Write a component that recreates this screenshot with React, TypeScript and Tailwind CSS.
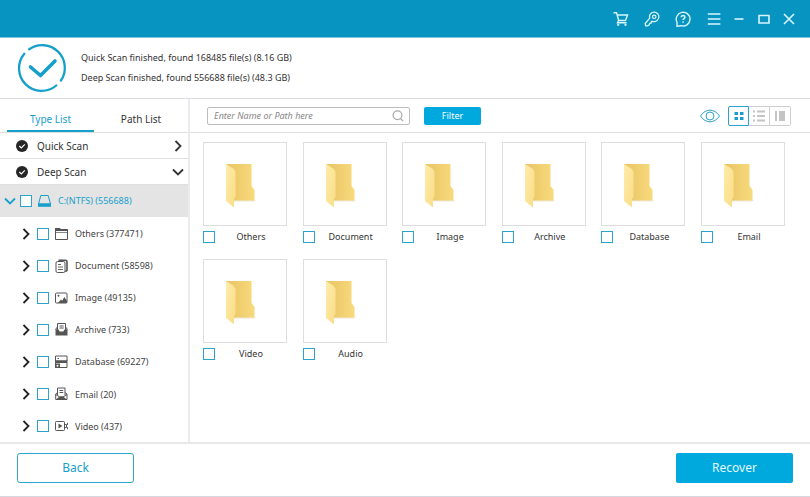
import React, { useState } from "react";

type IconProps = { children: React.ReactNode; className?: string; box?: string };

function Glyph({ children, className = "size-4", box = "0 0 16 16" }: IconProps) {
  return (
    <svg viewBox={box} className={`shrink-0 ${className}`} fill="none" stroke="currentColor" strokeWidth="1.2" aria-hidden="true">
      {children}
    </svg>
  );
}

const titleActions = [
  {
    label: "Cart",
    icon: (
      <>
        <path d="M.5 1.8h3l2.2 7.7h6.8l2-5.5H4.2M5.5 9.5l-1 2.3h9" strokeWidth="1.4" />
        <path d="M4.2 12.8h2v2h-2zM11.5 12.8h2v2h-2z" fill="currentColor" stroke="none" />
      </>
    ),
  },
  {
    label: "Register",
    icon: (
      <>
        <path d="M5.7 7.2A4.7 4.7 0 1 1 8.8 10.3L7.5 10.5l-.3 1.5-1.5.3-.5 1.6-1.4.9H1.7l-.5-2.3z" strokeWidth="1.3" strokeLinejoin="round" />
        <circle cx="10.2" cy="5.8" r="1.7" />
      </>
    ),
  },
  {
    label: "Help",
    icon: (
      <>
        <path d="M2 15.2v-3.9A6.9 6.9 0 1 1 6 14.7z" strokeWidth="1.4" />
        <path d="M6.3 6.2c0-2.4 3.6-2.3 3.6 0 0 1.4-1.8 1.3-1.8 2.9M8.1 10.2v1.5" strokeWidth="1.5" />
      </>
    ),
  },
  { label: "Menu", icon: <path d="M1.8 3h12.6M1.8 8h12.6M1.8 13h12.6" strokeWidth="1.6" /> },
];

const windowActions = [
  { label: "Minimize", icon: <path d="M3.5 8h9" strokeWidth="1.6" /> },
  { label: "Maximize", icon: <path d="M3 4.5h10v7.5H3z" strokeWidth="1.6" /> },
  { label: "Close", icon: <path d="m3 3 10 10M13 3 3 13" strokeWidth="1.6" /> },
];

const types = [
  {
    name: "Others",
    count: 377471,
    icon: (
      <>
        <path d="M1.5 3.5h12v10h-12z" strokeWidth="1" />
        <path d="M1 2h5l1.200 1.500H14V5H1z" fill="currentColor" stroke="none" />
        <path d="M1.500 6.500h12" strokeWidth=".7" />
      </>
    ),
  },
  {
    name: "Document",
    count: 58598,
    icon: (
      <>
        <path d="M4.500 2.300h7a1.500 1.500 0 0 1 1.500 1.500v8.500l-1.500 1.500" strokeWidth="1.600" />
        <rect x="2" y="3.500" width="9" height="11" rx="1.500" strokeWidth="1" />
        <path d="M4 6.500h3M4 9h5M4 11.500h5" strokeWidth=".9" />
      </>
    ),
  },
  {
    name: "Image",
    count: 49135,
    icon: (
      <>
        <rect x="1.500" y="3" width="11.500" height="10" rx="1" strokeWidth="1" />
        <path d="m4 13 3-3.500 1.200 1.300L10.300 7l2.700 4v2z" fill="currentColor" stroke="none" />
        <circle cx="4.500" cy="5.700" r="1" fill="currentColor" stroke="none" />
      </>
    ),
  },
  {
    name: "Archive",
    count: 733,
    icon: (
      <>
        <path d="M3.500 8V1.500h8V8M5.500 4h4.200M5.500 6h4.200" strokeWidth="1" />
        <path d="M1.500 7.500h3l1.200 2h3.600l1.200-2h3v6h-12z" fill="currentColor" stroke="none" />
        <path d="M2.500 5.500 1.800 8M12.500 5.500l.7 2.500" strokeWidth="1" />
      </>
    ),
  },
  {
    name: "Database",
    count: 69227,
    icon: (
      <>
        <path d="M1.500 2h11.500v5H1.500zM1.500 8.500h11.500v5H1.500z" strokeWidth="1" />
        <path d="M1 6.500h12.500v2H1zM1 9.500h5V14H1z" fill="currentColor" stroke="none" />
        <path d="M3.500 4.500H5" strokeWidth="1" />
        <circle cx="3.500" cy="11.800" r="1" fill="white" stroke="none" />
      </>
    ),
  },
  {
    name: "Email",
    count: 20,
    icon: (
      <>
        <path d="M3.500 9V2h7.500v7M5.500 4.500h3.700M5.500 6.500h3.700M3.500 6.500 1.700 8v5.500H13V8l-2-1.500" strokeWidth="1" />
        <path d="m1.700 8.500 4 2.500h3.300l4-2.500" strokeWidth="1" />
        <path d="m2 13.500 3.500-3h3.700l3.500 3z" fill="currentColor" stroke="none" />
      </>
    ),
  },
  {
    name: "Video",
    count: 437,
    icon: (
      <>
        <rect x="1.500" y="3.500" width="9" height="9" rx=".8" strokeWidth="1" />
        <path d="M4.500 5.500 8.500 8l-4 2.500z" fill="currentColor" stroke="none" />
        <path d="M11 6.500h1.500v3H11M13.500 4.800v2M13.500 9.200v2" strokeWidth="1" />
      </>
    ),
  },
];

const folders = ["Others", "Document", "Image", "Archive", "Database", "Email", "Video", "Audio"];

function CheckBox({ id }: { id: string }) {
  return (
    <input
      id={id}
      type="checkbox"
      className="size-3 shrink-0 appearance-none border border-[#2ba3cd] bg-white checked:bg-[#00a9dd]"
    />
  );
}

function Chevron({ down = false, className = "" }: { down?: boolean; className?: string }) {
  return (
    <Glyph className={`size-3 ${className}`} box="0 0 12 12">
      <path d={down ? "M1 3.500 6 8.500l5-5" : "M3.500 1l5 5-5 5"} strokeWidth="1.800" />
    </Glyph>
  );
}

function FolderArt() {
  return (
    <svg viewBox="0 0 32 46" className="h-[46px] w-8" aria-hidden="true">
      <defs>
        <linearGradient id="back" x1="0" x2="1">
          <stop offset="0" stopColor="#e8c464" />
          <stop offset="1" stopColor="#f8da7c" />
        </linearGradient>
        <linearGradient id="flap" x1="0" x2="1" y2="1">
          <stop offset="0" stopColor="#ffecaa" />
          <stop offset="1" stopColor="#f9dc86" />
        </linearGradient>
      </defs>
      <path d="M8 37h23l-2 1.500H9z" fill="#eee8d8" />
      <path d="M1 1h25.500v22l3 4v10.500H1z" fill="url(#back)" />
      <path d="m1 1 8 5 1.500 3v25L9 36v8.500L1 38z" fill="url(#flap)" />
    </svg>
  );
}

function StatusMark() {
  return (
    <svg viewBox="0 0 50 50" className="size-[50px] shrink-0" fill="none" stroke="#179fcc" strokeLinecap="round" aria-hidden="true">
      <path d="M12.200 6.300A22.600 22.600 0 0 1 43.900 37.500M39.300 42.500A22.600 22.600 0 0 1 7.300 10.800" strokeWidth="2.300" />
      <path d="m13.500 24 10 8.500 14.500-14.500" strokeWidth="3.600" strokeLinejoin="round" />
    </svg>
  );
}

function ScanRow({ name, open }: { name: string; open?: boolean }) {
  return (
    <button type="button" className="flex h-[26px] w-full shrink-0 items-center border-b border-[#dfdfdf] pt-px pr-1 pl-4 text-[#333]">
      <svg viewBox="0 0 12 12" className="size-3" aria-hidden="true">
        <circle cx="6" cy="6" r="6" fill="#262626" />
        <path d="m3.300 6 2 2 3.500-3.700" fill="none" stroke="white" strokeWidth="1.100" />
      </svg>
      <span className="ml-[9px] flex-1 text-left text-[10px]">{name}</span>
      <Chevron down={open} />
    </button>
  );
}

function Sidebar() {
  return (
    <aside className="flex w-[190px] shrink-0 flex-col border-r-2 border-[#e9ebee]">
      <div role="tablist" className="flex h-[34px] shrink-0 border-b border-[#dfdfdf] pl-[7px] text-[10px]">
        <button type="button" role="tab" aria-selected="true" className="w-[87px] shrink-0 border-b-2 border-[#179fcc] pt-[10px] text-[#179fcc]">
          Type List
        </button>
        <button type="button" role="tab" aria-selected="false" className="flex-1 border-b-2 border-transparent pt-[10px] text-[#333]">
          Path List
        </button>
      </div>
      <ScanRow name="Quick Scan" />
      <ScanRow name="Deep Scan" open />
      <div className="flex h-8 shrink-0 items-center bg-[#e4e4e4] pl-1 text-[#179fcc]">
        <Chevron down />
        <span className="ml-1 flex items-center">
          <CheckBox id="drive" />
        </span>
        <Glyph className="ml-[5px] size-4">
          <path d="M3.800 2.500h7.400L13.500 11H1.500z" strokeWidth="1" />
          <path d="M1 10.500h13v3.300H1z" fill="currentColor" stroke="none" />
        </Glyph>
        <label htmlFor="drive" className="ml-[5px] text-[9px]">
          C:(NTFS) (556688)
        </label>
      </div>
      <ul className="flex flex-1 flex-col">
        {types.map((t) => (
          <li key={t.name} className="flex min-h-8 flex-1 items-center pt-px pl-5 text-[#555]">
            <Chevron className="text-[#222]" />
            <span className="ml-[5px] flex items-center">
              <CheckBox id={`type-${t.name}`} />
            </span>
            <Glyph className="ml-[5px] size-4">{t.icon}</Glyph>
            <label htmlFor={`type-${t.name}`} className="ml-[5px] text-[9px] text-[#444]">
              {t.name} ({t.count})
            </label>
          </li>
        ))}
      </ul>
    </aside>
  );
}

function Toolbar() {
  const [query, setQuery] = useState("");
  return (
    <div className="flex h-[34px] shrink-0 items-center border-b border-[#dfdfdf] pr-[19px] pl-[17px]">
      <div className="flex h-[18px] w-[203px] items-center rounded-xs border border-[#bdbdbd] pr-[5px] pl-1.5">
        <input
          type="text"
          aria-label="Search by name or path"
          placeholder="Enter Name or Path here"
          value={query}
          onChange={(e) => setQuery(e.target.value)}
          className="min-w-0 flex-1 text-[9px] italic outline-none placeholder:text-[#888]"
        />
        <Glyph className="size-3 text-[#aaa]" box="0 0 12 12">
          <circle cx="5.500" cy="5.300" r="4.400" />
          <path d="m8.500 8.500 2.700 2.700" />
        </Glyph>
      </div>
      <button type="button" className="ml-[14px] h-[18px] w-[57px] rounded-xs bg-[#00a9dd] text-[9px] text-white">
        Filter
      </button>
      <button type="button" aria-label="Preview" className="mr-2 ml-auto text-[#2ba3cd]">
        <svg viewBox="0 0 20 14" className="h-[14px] w-5" fill="none" stroke="currentColor" aria-hidden="true">
          <path d="M.5 7C5.500-.8 14.500-.8 19.500 7 14.500 14.800 5.500 14.800.5 7z" />
          <circle cx="10" cy="7" r="4" />
        </svg>
      </button>
      <div className="flex h-5 text-[#c4c4c4]">
        <button type="button" aria-label="Grid view" className="flex w-[21px] items-center justify-center rounded-l-xs border border-[#2ba3cd] text-[#179fcc]">
          <Glyph className="size-3" box="0 0 12 12">
            <path d="M1.500 2h3.500v3H1.500zM7 2h3.500v3H7zM1.500 7h3.500v3H1.500zM7 7h3.500v3H7z" fill="currentColor" stroke="none" />
          </Glyph>
        </button>
        <button type="button" aria-label="List view" className="flex w-[21px] items-center justify-center border-y border-r border-[#cfcfcf]">
          <Glyph className="size-3" box="0 0 12 12">
            <path d="M0 1.500h2M4 1.500h8M0 6h2M4 6h8M0 10.500h2M4 10.500h8" strokeWidth="1.800" />
          </Glyph>
        </button>
        <button type="button" aria-label="Detail view" className="flex w-[21px] items-center justify-center rounded-r-xs border-y border-r border-[#cfcfcf]">
          <Glyph className="size-3" box="0 0 12 12">
            <path d="M1 1h2v10H1zM5 1h6v10H5z" fill="currentColor" stroke="none" />
          </Glyph>
        </button>
      </div>
    </div>
  );
}

function FolderGrid() {
  return (
    <div className="grid grid-cols-[repeat(6,84px)] justify-between gap-y-[15px] pt-[9px] pr-[25px] pl-[13px]">
      {folders.map((name) => (
        <div key={name}>
          <div className="flex h-[84px] items-center justify-center border border-[#dedede] pt-1 pr-2">
            <FolderArt />
          </div>
          <div className="flex h-[18px] items-center pt-1">
            <CheckBox id={`folder-${name}`} />
            <label htmlFor={`folder-${name}`} className="flex-1 text-center text-[9px] text-[#333]">
              {name}
            </label>
          </div>
        </div>
      ))}
    </div>
  );
}

export default function App() {
  return (
    <div className="flex min-h-screen flex-col border-b border-[#d5d9df] bg-white font-['Noto_Sans','Open_Sans',sans-serif] text-[#333]">
      <header className="flex h-[38px] shrink-0 items-center justify-end border-b border-[#7cc8df] bg-[#0794c1] pr-[13px] text-[#d9f5fb]">
        <div className="mr-[9px] flex gap-[15px]">
          {titleActions.map((a) => (
            <button key={a.label} type="button" aria-label={a.label}>
              <Glyph>{a.icon}</Glyph>
            </button>
          ))}
        </div>
        <div className="flex gap-[9px]">
          {windowActions.map((a) => (
            <button key={a.label} type="button" aria-label={a.label}>
              <Glyph>{a.icon}</Glyph>
            </button>
          ))}
        </div>
      </header>
      <section className="flex h-[61px] shrink-0 items-center gap-[14px] border-b border-[#dcdfe2] pl-[17px]">
        <StatusMark />
        <div className="text-[9px] leading-5">
          <p>Quick Scan finished, found 168485 file(s) (8.16 GB)</p>
          <p>Deep Scan finished, found 556688 file(s) (48.3 GB)</p>
        </div>
      </section>
      <div className="flex flex-1">
        <Sidebar />
        <main className="flex min-w-0 flex-1 flex-col">
          <Toolbar />
          <FolderGrid />
        </main>
      </div>
      <footer className="flex h-[54px] shrink-0 items-center justify-between border-t-2 border-[#e8e8e8] px-[17px] pb-1 text-[12px]">
        <button type="button" className="h-[30px] w-[117px] rounded-[3px] border border-[#2ba3cd] text-[#179fcc]">
          Back
        </button>
        <button type="button" className="h-[30px] w-[117px] rounded-xs bg-[#00a9dd] text-[#e2f8ff]">
          Recover
        </button>
      </footer>
    </div>
  );
}
